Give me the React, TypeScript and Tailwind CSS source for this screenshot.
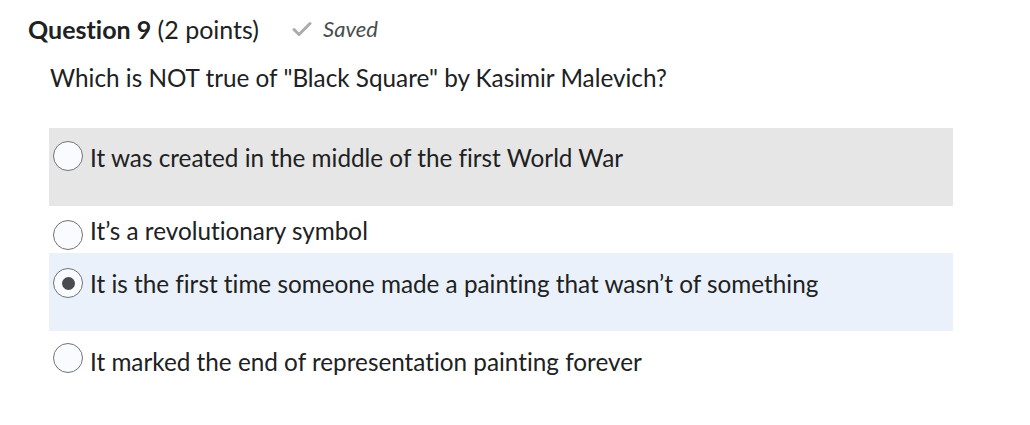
import React from "react";

interface Choice {
  text: string;
  rowClass: string;
  textClass: string;
  selected?: boolean;
}

const choices: Choice[] = [
  { text: "It was created in the middle of the first World War", rowClass: "h-[78px] pt-[13px] bg-[#e6e6e6]", textClass: "mt-[2px]" },
  { text: "It’s a revolutionary symbol", rowClass: "h-[47px] pt-[14px]", textClass: "-mt-[4px]" },
  { text: "It is the first time someone made a painting that wasn’t of something", rowClass: "h-[78px] pt-[15px] bg-[#eaf1fa]", textClass: "mt-[1px]", selected: true },
  { text: "It marked the end of representation painting forever", rowClass: "h-[60px] pt-[12px]", textClass: "mt-[4px]" },
];

const Radio = ({ selected }: { selected?: boolean }) => (
  <span className="w-[30px] h-[30px] rounded-full border border-[#6f7376] bg-[#f9fbff] flex items-center justify-center shrink-0">
    {selected && <span className="w-[13px] h-[13px] rounded-full bg-[#494c4e]" />}
  </span>
);

export default function App() {
  return (
    <div className="w-[1030px] h-[425px] bg-white text-[#202122] font-['Lato','Liberation_Sans',sans-serif] [font-variant-ligatures:none]">
      <div className="pl-[28px] pt-[11px] flex items-center h-[36px] box-content">
        <h2 className="text-[25px] leading-[36px]">
          <span className="font-bold">Question 9</span> (2 points)
        </h2>
        <span className="ml-[33px] flex items-center gap-[11px] text-[#494c4e]">
          <svg width="20" height="16" viewBox="0 0 20 16" fill="none">
            <path d="M2 8.5 L7 13.5 L18 2.5" stroke="#a9acaf" strokeWidth="3" strokeLinecap="round" strokeLinejoin="round" />
          </svg>
          <span className="italic text-[22px] leading-[36px]">Saved</span>
        </span>
      </div>
      <p className="pl-[50px] mt-[13px] text-[24.3px] leading-[36px]">
        Which is NOT true of "Black Square" by Kasimir Malevich?
      </p>
      <div className="ml-[49px] w-[904px] mt-[32px]">
        {choices.map((c) => (
          <label key={c.text} className={`flex items-start pl-[4px] ${c.rowClass}`}>
            <Radio selected={c.selected} />
            <span className={`ml-[7px] text-[24.3px] leading-[30px] ${c.textClass}`}>{c.text}</span>
          </label>
        ))}
      </div>
    </div>
  );
}
